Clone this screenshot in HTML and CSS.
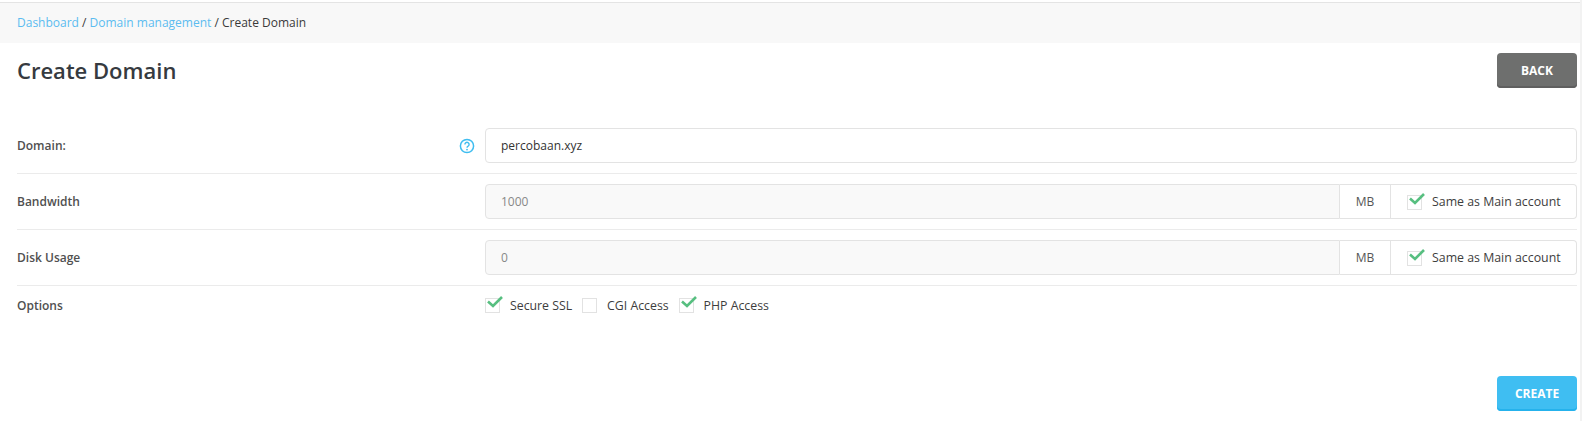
FILE: index.html
```html
<!DOCTYPE html>
<html lang="en">
<head>
<meta charset="utf-8">
<title>Create Domain</title>
<link rel="stylesheet" href="styles.css">
</head>
<body>
<div class="page">
  <nav class="crumbs"><a href="#">Dashboard</a> / <a href="#">Domain management</a> / Create Domain</nav>
  <header class="head">
    <h1>Create Domain</h1>
    <button class="btn btn-back" type="button">BACK</button>
  </header>
  <form class="form">
    <div class="row row-domain">
      <label class="lbl">Domain:</label>
      <span class="help">
        <svg viewBox="0 0 16 16" width="16" height="16"><circle cx="8" cy="8" r="6.6" fill="none" stroke="#3fbdf0" stroke-width="1.5"/><path d="M5.9 6.4a2.1 2.1 0 1 1 3.2 1.8c-.7.4-1.1.8-1.1 1.6" fill="none" stroke="#3fbdf0" stroke-width="1.4"/><circle cx="8" cy="11.6" r=".9" fill="#3fbdf0"/></svg>
      </span>
      <div class="field"><input class="input" type="text" value="percobaan.xyz"></div>
    </div>
    <div class="row">
      <label class="lbl">Bandwidth</label>
      <div class="field group">
        <input class="input input-off" type="text" value="1000" disabled>
        <span class="unit">MB</span>
        <span class="same"><span class="box"><svg class="tick" viewBox="0 0 16 12"><path d="M1 5.5 6 10 15 1" fill="none" stroke="#57bf80" stroke-width="2.6"/></svg></span>Same as Main account</span>
      </div>
    </div>
    <div class="row">
      <label class="lbl">Disk Usage</label>
      <div class="field group">
        <input class="input input-off" type="text" value="0" disabled>
        <span class="unit">MB</span>
        <span class="same"><span class="box"><svg class="tick" viewBox="0 0 16 12"><path d="M1 5.5 6 10 15 1" fill="none" stroke="#57bf80" stroke-width="2.6"/></svg></span>Same as Main account</span>
      </div>
    </div>
    <div class="row row-options">
      <label class="lbl">Options</label>
      <div class="field opts">
        <span class="opt"><span class="box"><svg class="tick" viewBox="0 0 16 12"><path d="M1 5.5 6 10 15 1" fill="none" stroke="#57bf80" stroke-width="2.6"/></svg></span>Secure SSL</span>
        <span class="opt"><span class="box"></span>CGI Access</span>
        <span class="opt"><span class="box"><svg class="tick" viewBox="0 0 16 12"><path d="M1 5.5 6 10 15 1" fill="none" stroke="#57bf80" stroke-width="2.6"/></svg></span>PHP Access</span>
      </div>
    </div>
    <div class="actions"><button class="btn btn-create" type="button">CREATE</button></div>
  </form>
</div>
</body>
</html>
```
FILE: styles.css
```css
* { box-sizing: border-box; }
html, body { margin: 0; padding: 0; background: #fff; }
body { height: 421px; overflow: hidden; border-right: 2px solid #f2f2f2; font-family: "Open Sans", "Liberation Sans", sans-serif; font-size: 12px; color: #333; }
.page { padding-top: 2px; }
.crumbs { height: 41px; line-height: 40px; padding-left: 17px; border-top: 1px solid #e4e4e4; background: #f8f8f8; font-size: 12px; color: #3a3a3a; }
.crumbs a { color: #5bbcf0; text-decoration: none; }
.head { display: flex; justify-content: space-between; align-items: flex-start; padding: 10px 3px 0 17px; height: 85px; }
.head h1 { margin: 0; font-size: 22px; line-height: 35px; font-weight: 600; color: #363a40; }
.btn { width: 80px; height: 35px; border: 0; border-radius: 4px; color: #fff; font: 700 12px "Open Sans", sans-serif; padding: 0; }
.btn-back { background: #6e6f6e; box-shadow: inset 0 -2px 0 #5f5f5f; }
.btn-create { background: #3fbef2; box-shadow: inset 0 -2px 0 #25b2ec; }
.form { padding: 0 3px 0 17px; }
.row { display: flex; align-items: center; height: 56px; border-top: 1px solid #ebebeb; }
.row-domain { border-top: 0; height: 45px; align-items: flex-start; }
.row-domain .lbl, .row-domain .help { line-height: 35px; height: 35px; }
.row-options { height: 40px; align-items: flex-start; padding-top: 11px; }
.lbl { width: 468px; flex: none; font-weight: 600; color: #505050; }
.row-domain .lbl { width: 442px; }
.help { width: 26px; flex: none; display: flex; align-items: center; }
.field { flex: 1; min-width: 0; }
.input { display: block; width: 100%; height: 35px; border: 1px solid #e3e3e3; border-radius: 4px; padding: 0 14px 0 15px; font: 12px "Open Sans", sans-serif; color: #333; background: #fff; outline: 0; }
.input-off { background: #f9f9f9; color: #888; }
.group { display: flex; height: 35px; }
.group .input { flex: 1; min-width: 0; border-radius: 4px 0 0 4px; }
.unit { width: 51px; flex: none; display: flex; align-items: center; justify-content: center; border: 1px solid #e3e3e3; border-left: 0; color: #555; }
.same { width: 186px; flex: none; display: flex; align-items: center; padding-left: 16px; border: 1px solid #e3e3e3; border-left: 0; border-radius: 0 4px 4px 0; font-size: 12.35px; color: #3d3d3d; }
.box { position: relative; top: 1px; flex: none; width: 15px; height: 15px; margin-right: 10px; border: 1px solid #e2e2e2; }
.tick { position: absolute; left: 1px; top: -3px; width: 16px; height: 12px; }
.opts { display: flex; gap: 10px; }
.opt { display: flex; align-items: center; height: 16px; font-size: 12.3px; color: #3d3d3d; }
.opt .box { top: 0; }
.actions { display: flex; justify-content: flex-end; margin-top: 51px; }
```
